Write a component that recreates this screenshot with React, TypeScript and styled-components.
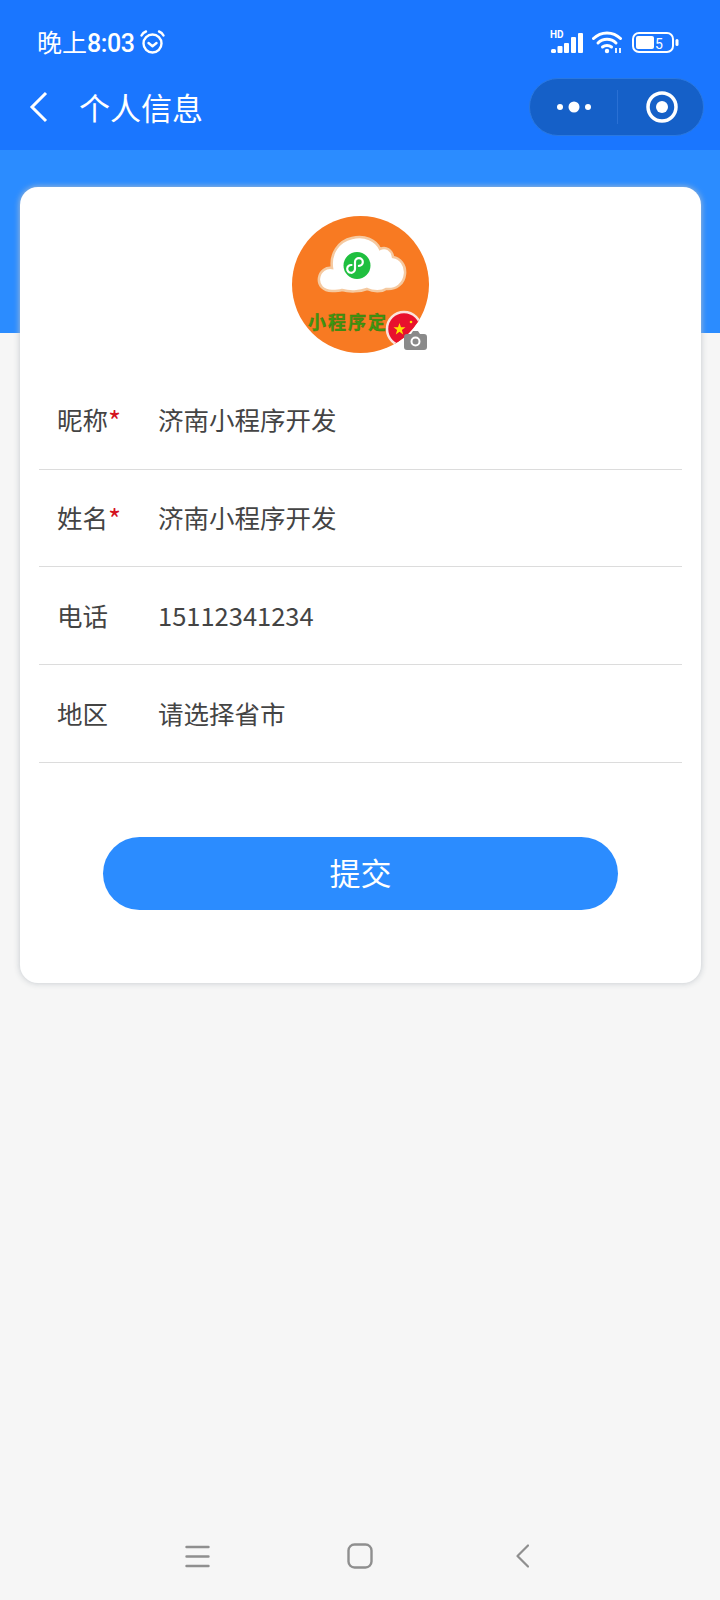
import React from 'react';
import styled, { createGlobalStyle } from 'styled-components';

const GlobalStyle = createGlobalStyle`
  html, body {
    margin: 0;
    padding: 0;
    background: #f6f6f6;
  }
  * {
    box-sizing: border-box;
  }
`;

const Page = styled.div`
  width: 720px;
  height: 1600px;
  display: flex;
  flex-direction: column;
  background: #f6f6f6;
  font-family: 'Noto Sans CJK SC', 'Noto Sans', Roboto, sans-serif;
  overflow: hidden;
`;

const Header = styled.header`
  height: 150px;
  background: #1a76ff;
  color: #fff;
  display: flex;
  flex-direction: column;
`;

const StatusBar = styled.div`
  height: 64px;
  padding: 20px 41px 0 37px;
  display: flex;
  align-items: center;
  justify-content: space-between;
`;

const StatusLeft = styled.div`
  display: flex;
  align-items: center;
  gap: 4px;
`;

const StatusTime = styled.span`
  font-size: 25px;
  line-height: 30px;
  padding-top: 1px;
`;

const StatusDigits = styled.span`
  font-family: Roboto, sans-serif;
  font-weight: 500;
  letter-spacing: -0.4px;
`;

const StatusRight = styled.div`
  display: flex;
  align-items: center;
  gap: 9px;
`;

const NavBar = styled.div`
  flex: 1;
  padding: 0 16px 0 29px;
  display: flex;
  align-items: center;
`;

const BackButton = styled.svg`
  width: 20px;
  height: 32px;
  margin-right: 30px;
`;

const Title = styled.h1`
  flex: 1;
  margin: 0;
  font-size: 31px;
  line-height: 40px;
  font-weight: 400;
`;

const Capsule = styled.div`
  width: 175px;
  height: 58px;
  margin-bottom: 1px;
  border-radius: 29px;
  background: #1560c8;
  border: 1px solid #2a78e0;
  display: flex;
  align-items: center;
`;

const CapsuleMenu = styled.div`
  flex: none;
  width: 87px;
  height: 100%;
  display: flex;
  align-items: center;
  justify-content: center;
`;

const CapsuleClose = styled.div`
  flex: 1;
  height: 100%;
  padding-left: 2px;
  display: flex;
  align-items: center;
  justify-content: center;
`;

const CapsuleDivider = styled.div`
  width: 1px;
  height: 34px;
  background: #2a70d4;
`;

const Main = styled.main`
  flex: 1;
  padding: 37px 19px 0 20px;
  background: linear-gradient(#2b8cff 0, #2b8cff 183px, #f6f6f6 183px);
`;

const Card = styled.section`
  height: 796px;
  background: #fff;
  border-radius: 18px;
  box-shadow: 0 0 6px rgba(190, 195, 200, 0.95);
  padding: 29px 19px 0;
  display: flex;
  flex-direction: column;
`;

const AvatarWrap = styled.div`
  align-self: center;
  width: 137px;
  height: 137px;
  margin-bottom: 18px;
  position: relative;
`;

const CameraBadge = styled.svg`
  position: absolute;
  right: 2px;
  bottom: 3px;
  width: 23px;
  height: 20px;
`;

const Row = styled.div<{ $h: number }>`
  height: ${({ $h }) => $h}px;
  padding: 0 0 3px 18px;
  border-bottom: 1px solid #dcdcdc;
  display: flex;
  align-items: center;
  font-size: 25.5px;
  color: #444;
`;

const Label = styled.div`
  width: 101px;
  display: flex;
  align-items: flex-start;
`;

const Star = styled.span`
  color: #d4121e;
  font-size: 28px;
  line-height: 26px;
  margin-top: 7px;
`;

const Value = styled.div`
  letter-spacing: 0;
`;

const SubmitButton = styled.button`
  align-self: center;
  width: 515px;
  height: 73px;
  margin-top: 74px;
  padding: 0 0 4px;
  border: 0;
  border-radius: 37px;
  background: #2b8cff;
  color: #fff;
  font-family: inherit;
  font-size: 31px;
`;

const BottomBar = styled.nav`
  height: 70px;
  margin-top: auto;
  padding: 0 0 18px 185px;
  display: grid;
  grid-template-columns: 162px 169px 13px;
  align-items: center;
`;

const rows = [
  { label: '昵称', value: '济南小程序开发', required: true, h: 99 },
  { label: '姓名', value: '济南小程序开发', required: true, h: 97 },
  { label: '电话', value: '15112341234', required: false, h: 98 },
  { label: '地区', value: '请选择省市', required: false, h: 98 },
];

const Avatar = () => (
  <svg width="137" height="137" viewBox="0 0 137 137">
    <circle cx="68.5" cy="68.5" r="68.5" fill="#f87a22" />
    <path
      d="M40 75C31 75 26 69 27 62C28 55 34 51 40 52C38 38 46 25 60 22C73 19 84 24 88 33C94 30 100 34 101 41C108 42 114 49 113 58C112 68 104 74 94 73C90 76 81 76 75 73C68 76 57 76 50 74C47 75 44 75 40 75Z"
      fill="#fff"
      stroke="#f5c9a0"
      strokeWidth="2.5"
    />
    <circle cx="65" cy="49.500" r="13.500" fill="#1fbf3f" />
    <path
      d="M59.500 49a3.900 3.900 0 1 0 3.500 4v-7a3.900 3.900 0 1 1 3.900 3.900"
      fill="none"
      stroke="#fff"
      strokeWidth="2.200"
      strokeLinecap="round"
    />
    <text
      x="16"
      y="113"
      fontSize="18"
      fontFamily="'Noto Sans CJK SC', sans-serif"
      fontWeight="700"
      fill="#3a9a10"
      stroke="#4a6a10"
      strokeWidth="0.4"
      letterSpacing="2"
    >
      小程序定
    </text>
    <clipPath id="avatarClip">
      <circle cx="68.5" cy="68.5" r="68.5" />
    </clipPath>
    <g clipPath="url(#avatarClip)">
      <circle cx="112" cy="113" r="17" fill="#e8112d" stroke="#fbe4dc" strokeWidth="2.500" />
      <polygon
        points="107.500,107 109,111.300 113.500,111.300 109.900,114 111.200,118.400 107.500,115.700 103.800,118.400 105.100,114 101.500,111.300 106,111.300"
        fill="#ffde00"
      />
      <circle cx="119" cy="106" r="1.300" fill="#ffde00" />
    </g>
  </svg>
);

export default function App() {
  return (
    <Page>
      <GlobalStyle />
      <Header>
        <StatusBar>
          <StatusLeft>
            <StatusTime>
              晚上<StatusDigits>8:03</StatusDigits>
            </StatusTime>
            <svg width="27" height="27" viewBox="0 0 27 27" fill="none" stroke="#fff" strokeWidth="2.400">
              <circle cx="13.500" cy="14.500" r="9" />
              <path d="M9.500 14l4 3.200 4-3.200" strokeLinecap="round" strokeLinejoin="round" />
              <path d="M2.500 6.500C3.500 4.500 5 3.200 7 2.500M24.500 6.500C23.500 4.500 22 3.200 20 2.500" strokeLinecap="round" />
            </svg>
          </StatusLeft>
          <StatusRight>
            <svg width="33" height="24" viewBox="0 0 33 24" fill="#fff">
              <text x="0" y="8" fontSize="10" fontWeight="700" fontFamily="Roboto, sans-serif">
                HD
              </text>
              <rect x="1" y="19" width="5" height="4" rx="1.500" />
              <rect x="7.500" y="16" width="5" height="7" rx="1" />
              <rect x="14" y="13" width="5" height="10" rx="1" />
              <rect x="21" y="7" width="5" height="16" rx="1" />
              <rect x="28" y="3" width="5" height="20" rx="1" />
            </svg>
            <svg width="31" height="24" viewBox="0 0 31 24" fill="none" stroke="#fff" strokeWidth="3">
              <path d="M1.500 8.500C9 1 21 1 28.500 8.500" strokeLinecap="round" />
              <path d="M6 13c5-5 13-5 18 0" strokeLinecap="round" />
              <path d="M10.500 17c2.500-2 6.500-2 9 0" strokeLinecap="round" />
              <circle cx="15" cy="21" r="2.200" fill="#fff" stroke="none" />
              <path d="M24 18v5M28 18v5" strokeWidth="1.800" />
            </svg>
            <svg width="47" height="21" viewBox="0 0 47 21">
              <rect x="1" y="1" width="40" height="19" rx="6" fill="none" stroke="#fff" strokeWidth="2" />
              <rect x="4" y="4" width="18" height="13" rx="2" fill="#fff" />
              <text x="23" y="17" fontSize="14" fill="#fff" fontFamily="Roboto, sans-serif">
                5
              </text>
              <rect x="43.500" y="7" width="3" height="7" rx="1.500" fill="#fff" />
            </svg>
          </StatusRight>
        </StatusBar>
        <NavBar>
          <BackButton viewBox="0 0 20 32" fill="none" stroke="#fff" strokeWidth="3">
            <path d="M17 2L3 16l14 14" />
          </BackButton>
          <Title>个人信息</Title>
          <Capsule>
            <CapsuleMenu>
              <svg width="34" height="12" viewBox="0 0 34 12" fill="#fff">
                <circle cx="3" cy="6" r="3" />
                <circle cx="17" cy="6" r="5.500" />
                <circle cx="31" cy="6" r="3" />
              </svg>
            </CapsuleMenu>
            <CapsuleDivider />
            <CapsuleClose>
              <svg width="32" height="32" viewBox="0 0 32 32">
                <circle cx="16" cy="16" r="14" fill="none" stroke="#fff" strokeWidth="3.500" />
                <circle cx="16" cy="16" r="6" fill="#fff" />
              </svg>
            </CapsuleClose>
          </Capsule>
        </NavBar>
      </Header>
      <Main>
        <Card>
          <AvatarWrap>
            <Avatar />
            <CameraBadge viewBox="0 0 23 20">
              <path
                d="M3 4h4l2-3h5l2 3h4a3 3 0 0 1 3 3v10a3 3 0 0 1-3 3H3a3 3 0 0 1-3-3V7a3 3 0 0 1 3-3z"
                fill="#8a8a8a"
              />
              <circle cx="11.500" cy="11.500" r="4" fill="none" stroke="#fff" strokeWidth="2" />
            </CameraBadge>
          </AvatarWrap>
          {rows.map((row) => (
            <Row key={row.label} $h={row.h}>
              <Label>
                {row.label}
                {row.required && <Star>*</Star>}
              </Label>
              <Value>{row.value}</Value>
            </Row>
          ))}
          <SubmitButton>提交</SubmitButton>
        </Card>
      </Main>
      <BottomBar>
        <svg width="25" height="23" viewBox="0 0 25 23" stroke="#8f8f8f" strokeWidth="2.400" strokeLinecap="round">
          <path d="M1.500 2h22M1.500 11.500h22M1.500 21h22" />
        </svg>
        <svg width="26" height="26" viewBox="0 0 26 26" fill="none" stroke="#8f8f8f" strokeWidth="2.400">
          <rect x="1.500" y="1.500" width="23" height="23" rx="6" />
        </svg>
        <svg width="13" height="24" viewBox="0 0 13 24" fill="none" stroke="#8f8f8f" strokeWidth="2.200" strokeLinecap="round" strokeLinejoin="round">
          <path d="M12 1.500L1.500 12 12 22.500" />
        </svg>
      </BottomBar>
    </Page>
  );
}
